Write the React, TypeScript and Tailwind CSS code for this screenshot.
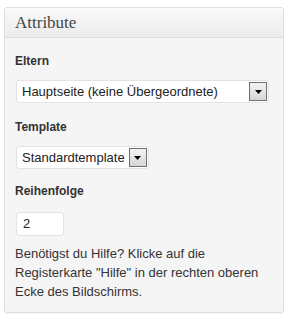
import React from "react";

function Arrow() {
  return (
    <svg width="7" height="4" viewBox="0 0 7 4">
      <path d="M0 0 H7 L3.5 4 Z" fill="#000" />
    </svg>
  );
}

function SelectBox({ text, width }: { text: string; width: string }) {
  return (
    <div
      className={`flex items-center justify-between h-[23px] bg-white border border-[#e3e3e3] rounded-[3px] pl-[5px] pr-[1px] ${width}`}
    >
      <span className="text-[13px] text-[#222] leading-none whitespace-nowrap">{text}</span>
      <div className="w-[18px] h-[19px] border border-[#6f6f6f] bg-gradient-to-b from-[#f3f3f3] to-[#d6d6d6] flex items-center justify-center ml-[4px]">
        <Arrow />
      </div>
    </div>
  );
}

export default function App() {
  return (
    <div className="w-[292px] h-[319px] bg-white pt-[7px] pl-[4px]" style={{ fontFamily: '"Liberation Sans", Arial, sans-serif' }}>
      <div className="w-[280px] h-[306px] border border-[#dfdfdf] rounded-[3px] bg-[#f5f5f5] shadow-[0_1px_1px_rgba(0,0,0,0.04)]">
        <div className="h-[30px] border-b border-[#dfdfdf] bg-gradient-to-b from-[#f9f9f9] to-[#ececec] flex items-center pl-[10px]">
          <span className="text-[17px] text-[#464646] leading-none" style={{ fontFamily: '"Liberation Serif", Georgia, serif' }}>
            Attribute
          </span>
        </div>
        <div className="pl-[10px] pr-[12px] pt-[16px]">
          <div className="text-[12px] font-bold text-[#333] leading-[14px]">Eltern</div>
          <div className="mt-[12px] ml-[1px]">
            <SelectBox text="Hauptseite (keine Übergeordnete)" width="w-[253px]" />
          </div>
          <div className="mt-[17px] text-[12px] font-bold text-[#333] leading-[14px]">Template</div>
          <div className="mt-[12px] ml-[1px] inline-block">
            <SelectBox text="Standardtemplate" width="w-auto" />
          </div>
          <div className="mt-[15px] text-[12px] font-bold text-[#333] leading-[14px]">Reihenfolge</div>
          <div className="mt-[14px] ml-[1px] w-[48px] h-[24px] bg-white border border-[#e3e3e3] rounded-[3px] flex items-center pl-[6px] text-[13px] text-[#222]">
            2
          </div>
          <p className="mt-[8px] text-[13px] leading-[19px] text-[#333]">
            Benötigst du Hilfe? Klicke auf die Registerkarte "Hilfe" in der rechten oberen Ecke des Bildschirms.
          </p>
        </div>
      </div>
    </div>
  );
}
